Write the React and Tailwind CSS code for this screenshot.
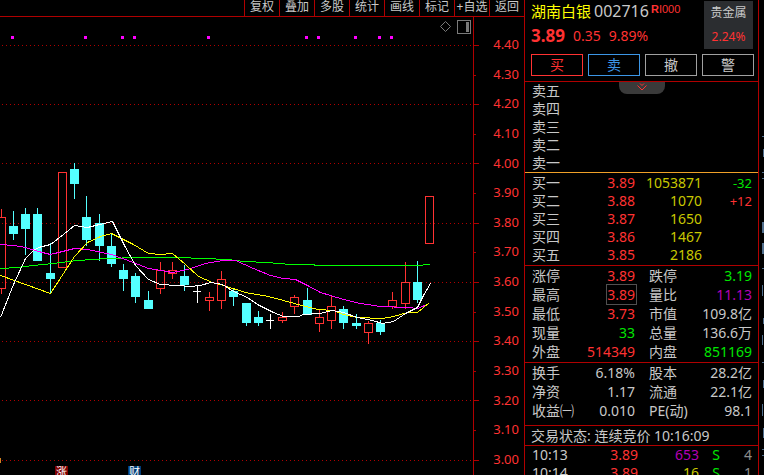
import React from 'react';
import clsx from 'clsx';

const menuItems = ['复权', '叠加', '多股', '统计', '画线', '标记', '+自选', '返回'];

const priceLevels = [
  '4.40', '4.30', '4.20', '4.10', '4.00', '3.90', '3.80', '3.70',
  '3.60', '3.50', '3.40', '3.30', '3.20', '3.10', '3.00',
];

const gridLines = [45, 104, 163, 223, 282, 341, 400, 460];
const minorTicks = [75, 134, 193, 252, 312, 371, 430];
const signalDots = [11, 84, 121, 133, 207, 305, 317, 354, 378, 390];

// [type, center x, body top, body bottom, wick top, wick bottom]
const candles = [
  ['up', 1, 217, 289, 209, 294],
  ['down', 13, 226, 234, 211, 240],
  ['down', 25, 214, 229, 208, 255],
  ['down', 37, 214, 261, 208, 261],
  ['down', 50, 273, 279, 243, 294],
  ['up', 62, 172, 268, 172, 268],
  ['down', 74, 169, 184, 163, 199],
  ['down', 86, 217, 240, 196, 246],
  ['down', 99, 223, 246, 214, 261],
  ['down', 111, 246, 264, 233, 267],
  ['down', 123, 270, 279, 264, 291],
  ['down', 135, 276, 297, 273, 303],
  ['down', 148, 300, 309, 291, 309],
  ['up', 160, 270, 289, 262, 294],
  ['up', 172, 270, 274, 262, 279],
  ['down', 184, 276, 285, 265, 291],
  ['flat', 197, 291, 292, 286, 303],
  ['up', 209, 297, 301, 292, 311],
  ['up', 221, 279, 301, 271, 309],
  ['down', 233, 291, 297, 288, 306],
  ['down', 246, 303, 323, 303, 326],
  ['down', 258, 317, 323, 311, 326],
  ['flat', 270, 320, 321, 314, 329],
  ['up', 282, 317, 321, 312, 323],
  ['up', 294, 297, 307, 295, 314],
  ['down', 307, 300, 315, 288, 315],
  ['up', 319, 317, 324, 309, 332],
  ['up', 331, 306, 321, 295, 329],
  ['down', 343, 309, 323, 306, 329],
  ['down', 356, 323, 326, 314, 329],
  ['up', 368, 323, 333, 321, 344],
  ['down', 380, 323, 332, 320, 335],
  ['up', 392, 300, 307, 292, 309],
  ['up', 405, 282, 304, 262, 309],
  ['down', 417, 282, 300, 261, 303],
  ['up', 429, 196, 244, 196, 244],
];

const averages = [
  {
    color: '#00ff00',
    points:
      '0,268 17,267 32,265 53,263 77,260 107,258 137,257 177,257 203,258 228,259 243,261 267,262 290,264 313,264 315,265 421,265 424,264 429,264',
  },
  {
    color: '#ff00ff',
    points:
      '0,244 13,245 25,247 38,251 50,254 74,248 87,249 111,254 133,262 148,268 172,272 187,269 205,263 222,260 235,260 253,268 270,275 283,278 295,279 307,285 320,292 343,299 360,303 380,306 407,307 417,308 429,303',
  },
  {
    color: '#ffff00',
    points:
      '0,275 25,284 50,293 63,273 74,256 87,242 100,236 111,233 133,244 148,253 160,254 172,253 185,264 198,276 212,282 223,285 245,292 268,296 283,300 305,306 318,309 333,310 343,314 357,317 382,318 393,316 407,312 417,312 429,302',
  },
  {
    color: '#ffffff',
    points:
      '0,317 13,284 25,258 33,250 38,247 50,244 63,234 74,225 87,227 99,224 112,221 124,245 135,265 148,279 160,284 177,285 190,286 200,285 210,282 222,284 233,291 247,297 257,304 273,312 283,316 298,316 303,314 319,313 332,310 343,312 357,317 372,320 382,323 393,321 405,313 417,307 423,295 430,283',
  },
];

const sells = ['卖五', '卖四', '卖三', '卖二', '卖一'];

const buys = [
  { label: '买一', price: '3.89', volume: '1053871', delta: '-32' },
  { label: '买二', price: '3.88', volume: '1070', delta: '+12' },
  { label: '买三', price: '3.87', volume: '1650' },
  { label: '买四', price: '3.86', volume: '1467' },
  { label: '买五', price: '3.85', volume: '2186' },
];

const RED = 'text-[#ff3232]';
const GREEN = 'text-[#00e600]';
const PURPLE = 'text-[#b400b4]';

const quoteStats = [
  [['涨停', '3.89', RED], ['跌停', '3.19', GREEN]],
  [['最高', '3.89', RED, true], ['量比', '11.13', PURPLE]],
  [['最低', '3.73', RED], ['市值', '109.8亿']],
  [['现量', '33', GREEN], ['总量', '136.6万']],
  [['外盘', '514349', RED], ['内盘', '851169', GREEN]],
];

const companyStats = [
  [['换手', '6.18%'], ['股本', '28.2亿']],
  [['净资', '1.17'], ['流通', '22.1亿']],
  [['收益㈠', '0.010'], ['PE(动)', '98.1']],
];

const trades = [
  { time: '10:13', price: '3.89', volume: '653', color: PURPLE, side: 'S', count: 4 },
  { time: '10:14', price: '3.89', volume: '16', color: 'text-[#c8c800]', side: 'S', count: 1 },
];

const Candle = ({ data }) => {
  const [type, x, top, bottom, high, low] = data;

  if (type === 'flat') {
    return (
      <g fill="#ffffff">
        <rect x={x - 4} y={top} width={8} height={1} />
        <rect x={x} y={high} width={1} height={low - high} />
      </g>
    );
  }

  if (type === 'down') {
    return (
      <g fill="#54ffff">
        <rect x={x - 4} y={top} width={9} height={bottom - top} />
        <rect x={x} y={high} width={1} height={low - high} />
      </g>
    );
  }

  return (
    <g fill="#ff3232">
      <rect x={x} y={high} width={1} height={top - high} />
      <rect x={x} y={bottom} width={1} height={low - bottom} />
      <rect x={x - 3.5} y={top + 0.5} width={8} height={bottom - top - 1} fill="none" stroke="#ff3232" />
    </g>
  );
};

const Toolbar = () => (
  <nav className="flex h-[17px] shrink-0 justify-end border-b border-[#b00000]">
    {menuItems.map((item) => (
      <button
        key={item}
        className="flex w-[35px] items-start justify-center border-l border-[#b00000] text-xs leading-[13px] whitespace-nowrap"
      >
        {item}
      </button>
    ))}
  </nav>
);

const Chart = () => (
  <div className="relative min-w-0 flex-1 border-r border-[#b00000]">
    <svg className="absolute inset-0 h-full w-full" shapeRendering="crispEdges">
      <g transform="translate(0 -17)">
        {gridLines.map((y) => (
          <line key={y} x1="2" x2="100%" y1={y + 0.5} y2={y + 0.5} stroke="#b00000" strokeDasharray="1 3" />
        ))}
        {signalDots.map((x) => (
          <rect key={x} x={x} y="36" width="3" height="3" fill="#ff00ff" />
        ))}
        {candles.map((candle) => (
          <Candle key={candle[1]} data={candle} />
        ))}
        {averages.map((line) => (
          <polyline
            key={line.color}
            points={line.points}
            transform="translate(0.5 0.5)"
            fill="none"
            stroke={line.color}
          />
        ))}
        <rect x="0" y="458" width="1" height="5" fill="#d08020" />
        <rect x="55" y="466" width="13" height="13" fill="#800000" />
        <text x="56" y="476" fontSize="11" fill="#ffffff">涨</text>
        <rect x="128" y="466" width="13" height="13" fill="#003c78" />
        <text x="129" y="476" fontSize="11" fill="#ffffff">财</text>
      </g>
    </svg>
    <div className="absolute top-[3px] right-[2px] flex items-center gap-1.5">
      <button aria-label="指标">
        <svg className="block" width="11" height="14" fill="none" stroke="#7a7a7a">
          <path d="M5.5 1.5 L10.5 6.5 L5.5 11.5 L0.5 6.5 Z" />
        </svg>
      </button>
      <button aria-label="侧栏">
        <svg className="block" width="14" height="14" shapeRendering="crispEdges">
          <rect x="0.5" y="0.5" width="13" height="13" fill="none" stroke="#7a7a7a" />
          <rect x="9" y="2" width="3" height="10" fill="#7a7a7a" />
        </svg>
      </button>
    </div>
  </div>
);

const PriceAxis = () => (
  <div className="relative w-[50px] shrink-0">
    <svg className="absolute inset-0 h-full w-full" shapeRendering="crispEdges" fill="#b00000">
      <g transform="translate(0 -17)">
        {gridLines.map((y) => (
          <rect key={y} x="0" y={y} width="5" height="1" />
        ))}
        {minorTicks.map((y) => (
          <rect key={y} x="0" y={y} width="2" height="1" />
        ))}
      </g>
    </svg>
    <ul className="mt-[17px] flex h-[435px] flex-col justify-between pr-[5px] text-right text-[13px] leading-[20px] text-[#ff3232]">
      {priceLevels.map((price) => (
        <li key={price}>{price}</li>
      ))}
    </ul>
  </div>
);

const QuoteHeader = () => (
  <header className="flex h-[81px] shrink-0 flex-col pr-1 pl-[6px]">
    <div className="flex h-[54px] justify-between">
      <div>
        <h1 className="flex h-[22px] items-center leading-[20px]">
          <span className="text-[15px] text-[#ffff00]">湖南白银</span>
          <span className="ml-[3px] text-base leading-[20px]">002716</span>
          <span className="mb-1 ml-0.5 font-['Liberation_Sans_Narrow','Liberation_Sans',sans-serif] text-[11px] leading-[12px] text-[#ff3232]">
            <b>R</b>I000
          </span>
        </h1>
        <p className="flex h-[28px] items-center gap-2 text-sm text-[#ff3232]">
          <b className="text-[17px]">3.89</b>
          <span>0.35</span>
          <span>9.89%</span>
        </p>
      </div>
      <a
        href="#sector"
        className="mt-px mr-px flex h-[48px] w-[49px] flex-col items-center justify-between bg-[#2b2d30] pt-0.5 pb-0.5 text-xs leading-[20px]"
      >
        <span>贵金属</span>
        <span className="text-[#ff3232]">2.24%</span>
      </a>
    </div>
    <div className="grid grid-cols-4 gap-[5px] text-sm leading-[20px]">
      <button className="border border-[#ff3232] text-[#ff3232]">买</button>
      <button className="border border-[#3c96e6] text-[#3c96e6]">卖</button>
      <button className="border border-[#a0a0a0]">撤</button>
      <button className="border border-[#a0a0a0]">警</button>
    </div>
  </header>
);

const SellBook = () => (
  <section className="relative border-t border-[#b00000] pl-[7px]">
    <ul className="leading-[18px]">
      {sells.map((label) => (
        <li key={label}>{label}</li>
      ))}
    </ul>
    <button
      aria-label="展开"
      className="absolute top-0 left-1/2 flex h-[12px] w-[46px] -translate-x-1/2 justify-center rounded-b-lg bg-[#3a3a3a]"
    >
      <svg width="10" height="10" fill="none" stroke="#ff3232">
        <path d="M3 1.5 L5 3.5 L7 1.5 M0.5 3.5 L5 8 L9.5 3.5" />
      </svg>
    </button>
  </section>
);

const BuyBook = () => (
  <section className="border-t border-[#f0a028] py-px pr-[6px] pl-[7px]">
    <table className="w-full table-fixed text-right leading-[18px]">
      <tbody>
        {buys.map((row) => (
          <tr key={row.label}>
            <th className="w-[43px] text-left font-normal">{row.label}</th>
            <td className="w-[60px] text-[#ff3232]">{row.price}</td>
            <td className="w-[67px] text-[#c8c800]">{row.volume}</td>
            <td className={clsx('text-[13px]', row.delta === '-32' ? GREEN : RED)}>{row.delta}</td>
          </tr>
        ))}
      </tbody>
    </table>
  </section>
);

const StatsTable = ({ rows }) => (
  <table className="w-full table-fixed text-right leading-[19px]">
    <tbody>
      {rows.map(([left, right]) => (
        <tr key={left[0]}>
          <th className="w-[43px] text-left font-normal whitespace-nowrap">{left[0]}</th>
          <td className={clsx('w-[60px]', left[2])}>
            {left[3] ? <span className="-mr-0.5 border border-[#505050] pr-px">{left[1]}</span> : left[1]}
          </td>
          <th className="w-[60px] pl-[14px] text-left font-normal whitespace-nowrap">{right[0]}</th>
          <td className={right[2]}>{right[1]}</td>
        </tr>
      ))}
    </tbody>
  </table>
);

const TradeList = () => (
  <section className="min-h-0 flex-1 overflow-hidden border-t border-[#b00000] pr-[6px] pl-[7px]">
    <table className="w-full table-fixed text-right leading-[18px]">
      <tbody>
        {trades.map((trade) => (
          <tr key={trade.time}>
            <td className="w-[43px] text-left">{trade.time}</td>
            <td className="w-[63px] text-[#ff3232]">{trade.price}</td>
            <td className={clsx('w-[61px]', trade.color)}>{trade.volume}</td>
            <td className="w-[21px] text-[#00e600]">{trade.side}</td>
            <td className="text-[#8c8c8c]">{trade.count}</td>
          </tr>
        ))}
      </tbody>
    </table>
  </section>
);

const App = () => {
  return (
    <div className="flex h-screen overflow-hidden bg-black font-['Noto_Sans','Noto_Sans_CJK_SC',sans-serif] text-sm text-[#c8c8c8]">
      <main className="flex min-w-0 flex-1 flex-col">
        <Toolbar />
        <div className="flex min-h-0 flex-1">
          <Chart />
          <PriceAxis />
        </div>
      </main>

      <aside className="flex w-[235px] shrink-0 flex-col border-x border-[#b00000]">
        <QuoteHeader />
        <SellBook />
        <BuyBook />
        <section className="border-t border-[#b00000] pr-[6px] pb-px pl-[7px]">
          <StatsTable rows={quoteStats} />
        </section>
        <section className="border-t border-[#b00000] pr-[6px] pb-[5px] pl-[7px]">
          <StatsTable rows={companyStats} />
        </section>
        <p className="border-t border-[#b00000] pl-[6px] text-sm leading-[19px] whitespace-nowrap">
          交易状态: 连续竞价 10:16:09
        </p>
        <TradeList />
      </aside>

      {/* edge of the neighbouring panel */}
      <svg className="h-full w-[5px] shrink-0" shapeRendering="crispEdges" fill="#506e8c">
        <path d="M3 136h2v1h-2z M4 149h1v8h-1z M3 172h2v1h-2z M3 178h2v1h-2z M3 222h2v11h-2z M3 243h2v11h-2z M3 268h2v1h-2z M3 285h1v11h-1z M4 318h1v6h-1z M3 335h1v10h-1z M3 362h2v1h-2z M4 380h1v8h-1z M3 404h1v12h-1z M4 428h1v10h-1z M3 449h2v1h-2z M3 455h2v1h-2z" />
      </svg>
    </div>
  );
};

export default App;
